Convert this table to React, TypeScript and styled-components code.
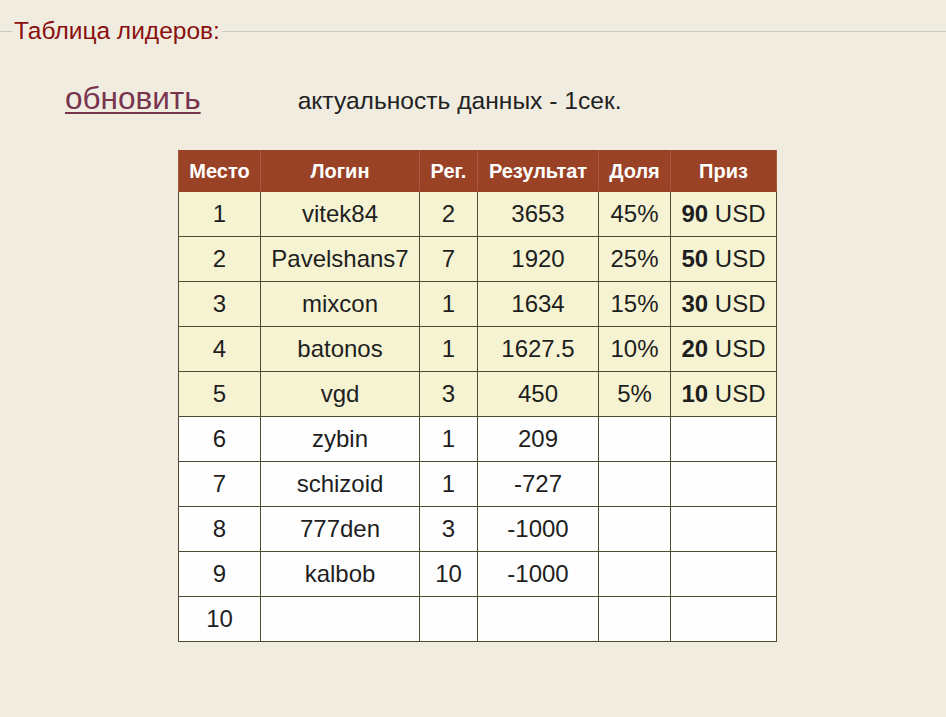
import React from "react";
import styled, { createGlobalStyle } from "styled-components";

type Leader = {
  place: number;
  login?: string;
  reg?: number;
  result?: string;
  share?: string;
  prize?: number;
};

const leaders: Leader[] = [
  { place: 1, login: "vitek84", reg: 2, result: "3653", share: "45%", prize: 90 },
  { place: 2, login: "Pavelshans7", reg: 7, result: "1920", share: "25%", prize: 50 },
  { place: 3, login: "mixcon", reg: 1, result: "1634", share: "15%", prize: 30 },
  { place: 4, login: "batonos", reg: 1, result: "1627.5", share: "10%", prize: 20 },
  { place: 5, login: "vgd", reg: 3, result: "450", share: "5%", prize: 10 },
  { place: 6, login: "zybin", reg: 1, result: "209" },
  { place: 7, login: "schizoid", reg: 1, result: "-727" },
  { place: 8, login: "777den", reg: 3, result: "-1000" },
  { place: 9, login: "kalbob", reg: 10, result: "-1000" },
  { place: 10 },
];

const columns = [
  { title: "Место", width: 82 },
  { title: "Логин", width: 159 },
  { title: "Рег.", width: 58 },
  { title: "Результат", width: 121 },
  { title: "Доля", width: 72 },
  { title: "Приз", width: 106 },
];

const App: React.FC = () => {
  return (
    <>
      <GlobalStyle />
      <Board>
        <Legend>Таблица лидеров:</Legend>
        <TopBar>
          <RefreshLink href="#">обновить</RefreshLink>
          <Freshness>актуальность данных - 1сек.</Freshness>
        </TopBar>
        <LeaderTable>
          <colgroup>
            {columns.map((c) => (
              <col key={c.title} style={{ width: c.width }} />
            ))}
          </colgroup>
          <thead>
            <tr>
              {columns.map((c) => (
                <HeadCell key={c.title}>{c.title}</HeadCell>
              ))}
            </tr>
          </thead>
          <tbody>
            {leaders.map((l) => (
              <Row key={l.place} $prized={l.prize !== undefined}>
                <Cell>{l.place}</Cell>
                <Cell>{l.login}</Cell>
                <Cell>{l.reg}</Cell>
                <Cell>{l.result}</Cell>
                <Cell>{l.share}</Cell>
                <Cell>
                  {l.prize !== undefined && (
                    <>
                      <b>{l.prize}</b> USD
                    </>
                  )}
                </Cell>
              </Row>
            ))}
          </tbody>
        </LeaderTable>
      </Board>
    </>
  );
};

const GlobalStyle = createGlobalStyle`
  html, body {
    margin: 0;
    padding: 0;
    background: #f0ede0;
    font-family: "Liberation Sans", Arial, sans-serif;
  }
  body {
    height: 717px;
  }
`;

const Board = styled.fieldset`
  margin: 18px 0 0 -2px;
  padding: 0 0 40px 14px;
  border: none;
  border-top: 1px solid #cbc9c2;
  min-width: 0;
`;

const Legend = styled.legend`
  padding: 0 2px;
  color: #8a0f0f;
  font-size: 24.5px;
  line-height: 26px;
`;

const TopBar = styled.div`
  display: flex;
  align-items: baseline;
  gap: 97px;
  padding: 36px 0 0 53px;
  height: 80px;
  box-sizing: border-box;
`;

const RefreshLink = styled.a`
  color: #78344d;
  font-size: 31.5px;
  text-decoration: underline;
  text-decoration-thickness: 2px;
  text-underline-offset: 3px;
`;

const Freshness = styled.span`
  color: #222;
  font-size: 24.6px;
`;

const LeaderTable = styled.table`
  margin: 26px 0 0 166px;
  border-collapse: collapse;
  table-layout: fixed;
  width: 598px;
`;

const HeadCell = styled.th`
  background: #9a4226;
  color: #fff;
  font-size: 20px;
  font-weight: bold;
  height: 40px;
  padding: 0;
  border: 1px solid #9a4226;
  border-left-color: #a95a3e;
  border-right-color: #a95a3e;
  text-align: center;
`;

const Row = styled.tr<{ $prized: boolean }>`
  background: ${(p) => (p.$prized ? "#f6f3d3" : "#fefefe")};
`;

const Cell = styled.td`
  border: 1px solid #4f4b31;
  height: 44px;
  padding: 0;
  text-align: center;
  font-size: 24px;
  color: #1e1e1e;
  white-space: nowrap;

  b {
    font-weight: bold;
  }
`;

export default App;
